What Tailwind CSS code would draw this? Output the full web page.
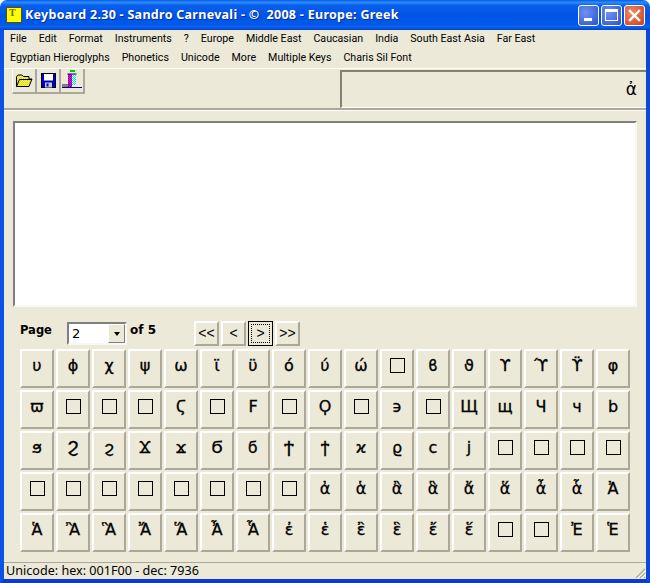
<!DOCTYPE html>
<html lang="en">
<head>
  <meta charset="UTF-8" />
  <title>Keyboard 2.30</title>
  <script src="https://cdn.jsdelivr.net/npm/@tailwindcss/browser@4"></script>
</head>
<body class="bg-white m-0">
  <div class="w-[650px] h-[583px] flex flex-col overflow-hidden rounded-t-[7px] font-['Roboto',sans-serif] text-black">

    <!-- Title bar -->
    <div class="h-[30px] shrink-0 flex items-center pl-[6px] pr-[5px] bg-[linear-gradient(to_bottom,#0a5ae8_0%,#2a8cf8_8%,#0a60ee_18%,#0054e3_50%,#0058ea_80%,#0a62f0_90%,#0040c8_100%)]">
      <div class="w-[16px] h-[16px] bg-[#ffff00] border border-[#555500] flex items-start pl-[2px] font-['Liberation_Serif',serif] font-bold text-[10px] leading-[9px] text-[#7a6a00]">T</div>
      <div class="ml-[3px] font-['Noto_Sans',sans-serif] font-bold text-[12.5px] tracking-[0.29px] whitespace-pre text-white [text-shadow:1px_1px_0_#0a2f9a]">Keyboard 2.30 - Sandro Carnevali - ©  2008 - Europe: Greek</div>
      <div class="ml-auto flex gap-[2px]">
        <div class="w-[21px] h-[21px] rounded-[3px] border border-white bg-[radial-gradient(circle_at_35%_35%,#6f94ee,#2a50d0)] flex items-end pl-[5px] pb-[4px]">
          <div class="w-[8px] h-[3px] bg-white"></div>
        </div>
        <div class="w-[21px] h-[21px] rounded-[3px] border border-white bg-[radial-gradient(circle_at_35%_35%,#6f94ee,#2a50d0)] flex items-center justify-center">
          <div class="w-[13px] h-[12px] border border-white border-t-[3px]"></div>
        </div>
        <div class="w-[21px] h-[21px] rounded-[3px] border border-white bg-[radial-gradient(circle_at_35%_35%,#ee8a6a,#c8401c)] flex items-center justify-center">
          <svg width="13" height="13" viewBox="0 0 13 13"><path d="M2 2 L11 11 M11 2 L2 11" stroke="#fff" stroke-width="2.4" stroke-linecap="square"/></svg>
        </div>
      </div>
    </div>

    <!-- Window body -->
    <div class="flex-1 flex flex-col bg-[#ece9d8] border-x-4 border-b-4 border-l-[#0b52e6] border-r-[#0b48dc] border-b-[#0a3cd0] min-h-0">

      <div class="flex h-[19px] items-center pb-[1px] text-[10.65px] leading-none whitespace-nowrap">
        <span class="px-[6px]">File</span><span class="px-[6px]">Edit</span><span class="px-[6px]">Format</span><span class="px-[6px]">Instruments</span><span class="px-[6px]">?</span><span class="px-[6px]">Europe</span><span class="px-[6px]">Middle East</span><span class="px-[6px]">Caucasian</span><span class="px-[6px]">India</span><span class="px-[6px]">South East Asia</span><span class="px-[6px]">Far East</span>
      </div>
      <div class="flex h-[19px] items-center pb-[1px] text-[10.65px] leading-none whitespace-nowrap">
        <span class="px-[6px]">Egyptian Hieroglyphs</span><span class="px-[6px]">Phonetics</span><span class="px-[6px]">Unicode</span><span class="px-[6px]">More</span><span class="px-[6px]">Multiple Keys</span><span class="px-[6px]">Charis Sil Font</span>
      </div>

      <!-- Toolbar -->
      <div class="h-[42px] shrink-0 flex border-t border-t-white border-b-2 border-b-[#aca899]">
        <div class="flex pl-[8px] h-[25px]">
          <div class="w-[25px] h-[25px] border-l border-l-white border-r-2 border-r-[#aca899] border-b-2 border-b-[#aca899] flex items-center justify-center">
            <svg width="18" height="14" viewBox="0 0 18 14">
              <defs><pattern id="dy" width="2" height="2" patternUnits="userSpaceOnUse"><rect width="2" height="2" fill="#ffff00"/><rect width="1" height="1" fill="#c8c880"/><rect x="1" y="1" width="1" height="1" fill="#d8d880"/></pattern></defs>
              <path d="M1.5 12.5 V2.5 L3 1 H7 L8.5 2.5 H14 V5 H17 L14 12.5 Z" fill="url(#dy)" stroke="#000" stroke-width="1"/>
              <path d="M1.5 12.5 L4.5 5.5 H17" fill="none" stroke="#000" stroke-width="1"/>
            </svg>
          </div>
          <div class="w-[24px] h-[25px] border-r-2 border-r-[#aca899] border-b-2 border-b-[#aca899] flex items-center justify-center">
            <svg width="15" height="15" viewBox="0 0 15 15">
              <rect x="0.5" y="0.5" width="14" height="14" fill="#0000c8" stroke="#000"/>
              <rect x="3" y="1" width="9" height="6.5" fill="#fff"/>
              <rect x="4" y="9.5" width="7" height="5" fill="#c8c8d8"/>
              <rect x="5.5" y="10.5" width="2" height="3" fill="#0000c8"/>
            </svg>
          </div>
          <div class="w-[24px] h-[25px] border-r-2 border-r-[#aca899] border-b-2 border-b-[#aca899] flex items-center justify-center">
            <svg width="20" height="21" viewBox="0 0 20 21">
              <defs>
                <pattern id="dm" width="2" height="2" patternUnits="userSpaceOnUse"><rect width="2" height="2" fill="#ff00ff"/><rect width="1" height="1" fill="#500050"/><rect x="1" y="1" width="1" height="1" fill="#800080"/></pattern>
                <pattern id="dc" width="2" height="2" patternUnits="userSpaceOnUse"><rect width="2" height="2" fill="#ffffff"/><rect width="1" height="1" fill="#00e0e8"/><rect x="1" y="1" width="1" height="1" fill="#00e0e8"/></pattern>
              </defs>
              <rect x="8" y="0" width="5" height="2" fill="#00c800"/>
              <rect x="6" y="4" width="4" height="13" fill="url(#dm)"/>
              <rect x="10" y="4" width="4" height="13" fill="url(#dc)"/>
              <path d="M5.5 4 H14.5" stroke="#000080" stroke-width="1"/>
              <rect x="0" y="14" width="6" height="3" fill="#808080"/>
              <rect x="0" y="17" width="20" height="1" fill="#000090"/>
              <rect x="10" y="15" width="8" height="2" fill="#e8f0f0"/>
            </svg>
          </div>
        </div>
        <div class="ml-[255px] mt-[1px] flex-1 h-[38px] border-l-2 border-t-2 border-l-[#85836f] border-t-[#85836f] border-b border-b-white flex items-center justify-end pr-[9px] font-['DejaVu_Sans',sans-serif] text-[17px]">ἀ</div>
      </div>

      <div class="h-px bg-white shrink-0"></div>

      <!-- Text box -->
      <div class="mx-[9px] mt-[10px] h-[186px] bg-white border-2 border-t-[#808080] border-l-[#808080] border-r-[#f8f8f4] border-b-[#f8f8f4] shrink-0"></div>

      <!-- Page row -->
      <div class="flex items-start h-[30px] mt-[12px] pl-[16px] shrink-0 font-bold text-[11.5px] font-['DejaVu_Sans',sans-serif]">
        <span class="w-[47px] mt-[3px]">Page</span>
        <div class="w-[60px] h-[23px] mt-[3px] flex bg-white border-2 border-t-[#808080] border-l-[#808080] border-r-[#f8f8f4] border-b-[#f8f8f4]">
          <span class="flex-1 pl-[3px] pt-[2px] font-normal text-[13px] leading-[16px]">2</span>
          <div class="w-[17px] bg-[#ece9d8] border border-t-white border-l-white border-r-[#808080] border-b-[#808080] flex items-center justify-center">
            <div class="w-0 h-0 border-x-[3.5px] border-x-transparent border-t-[4px] border-t-black"></div>
          </div>
        </div>
        <span class="ml-[3px] mt-[2px] w-[64px] text-[12px]">of 5</span>
        <div class="flex gap-[2px] mt-[2px] font-normal font-['Liberation_Sans',sans-serif] text-[14px]">
          <div class="w-[25px] h-[25px] flex items-center justify-center bg-[#ece9d8] border-2 border-t-white border-l-white border-r-[#aca899] border-b-[#aca899]">&lt;&lt;</div>
          <div class="w-[25px] h-[25px] flex items-center justify-center bg-[#ece9d8] border-2 border-t-white border-l-white border-r-[#aca899] border-b-[#aca899]">&lt;</div>
          <div class="w-[25px] h-[25px] flex items-center justify-center bg-[#ece9d8] border border-black p-[2px]">
            <div class="w-full h-full flex items-center justify-center border border-dotted border-black">&gt;</div>
          </div>
          <div class="w-[25px] h-[25px] flex items-center justify-center bg-[#ece9d8] border-2 border-t-white border-l-white border-r-[#aca899] border-b-[#aca899]">&gt;&gt;</div>
        </div>
      </div>

      <!-- Character grid -->
      <div id="keys" class="grid grid-cols-[repeat(17,34px)] auto-rows-[39px] gap-x-[2px] gap-y-[2px] pl-[16px] font-['DejaVu_Sans',sans-serif] [-webkit-text-stroke:0.3px_black] text-[16px] leading-none shrink-0"></div>

      <!-- Status bar -->
      <div class="mt-auto h-[17px] shrink-0 flex items-center border-t border-t-[#aca899] pl-[2px] text-[12.6px] leading-none relative font-['Noto_Sans',sans-serif]">
        Unicode: hex: 001F00 - dec: 7936
        <svg class="absolute right-0 bottom-0" width="12" height="12" viewBox="0 0 12 12">
          <path d="M11 2 L2 11 M11 6 L6 11 M11 10 L10 11" stroke="#aca899" stroke-width="1.2"/>
          <path d="M12 3 L3 12 M12 7 L7 12" stroke="#fff" stroke-width="1"/>
        </svg>
      </div>
    </div>
  </div>

  <script>
    // 0 = character not in the font (empty box)
    const keys = [
      'υ','ϕ','χ','ψ','ω','ϊ','ϋ','ό','ύ','ώ',0,'ϐ','ϑ','ϒ','ϓ','ϔ','φ',
      'ϖ',0,0,0,'Ϛ',0,'Ϝ',0,'Ϙ',0,'϶',0,'Щ','щ','Ч','ч','b',
      'ϧ','Ϩ','ϩ','Ϫ','ϫ','Ϭ','ϭ','Ϯ','ϯ','ϰ','ϱ','ϲ','ϳ',0,0,0,0,
      0,0,0,0,0,0,0,0,'ἀ','ἁ','ἂ','ἃ','ἄ','ἅ','ἆ','ἇ','Ἀ',
      'Ἁ','Ἂ','Ἃ','Ἄ','Ἅ','Ἆ','Ἇ','ἐ','ἑ','ἒ','ἓ','ἔ','ἕ',0,0,'Ἐ','Ἑ'
    ];
    document.getElementById('keys').innerHTML = keys.map(k => `
      <div class="flex items-center justify-center bg-[#ece9d8] border-2 border-t-white border-l-white border-r-[#aca899] border-b-[#aca899] pb-[6px]">
        ${k ? k : '<div class="w-[15px] h-[15px] border border-black [-webkit-text-stroke:0]"></div>'}
      </div>`).join('');
  </script>
</body>
</html>
